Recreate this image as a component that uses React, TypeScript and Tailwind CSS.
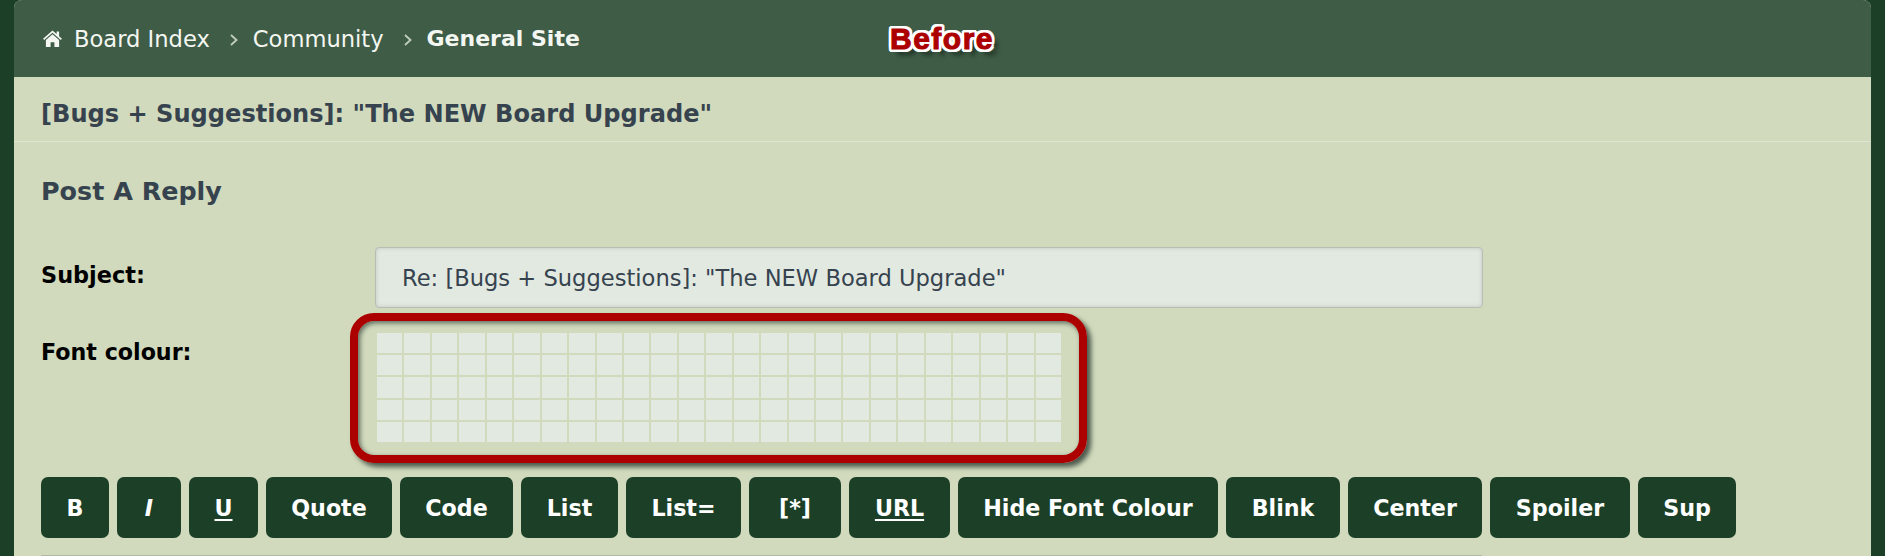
const cells = Array.from({ length: 25 * 5 });

const buttons: { label: string; w: string; extra?: string }[] = [
  { label: "B", w: "w-[68px]" },
  { label: "I", w: "w-[64px]", extra: "italic" },
  { label: "U", w: "w-[69px]", extra: "underline decoration-2 underline-offset-[3px]" },
  { label: "Quote", w: "w-[126px]" },
  { label: "Code", w: "w-[113px]" },
  { label: "List", w: "w-[97px]" },
  { label: "List=", w: "w-[115px]" },
  { label: "[*]", w: "w-[92px]" },
  { label: "URL", w: "w-[101px]", extra: "underline decoration-2 underline-offset-[3px]" },
  { label: "Hide Font Colour", w: "w-[260px]" },
  { label: "Blink", w: "w-[114px]" },
  { label: "Center", w: "w-[134px]" },
  { label: "Spoiler", w: "w-[140px]" },
  { label: "Sup", w: "w-[98px]" },
];

function Chevron() {
  return (
    <svg width="10" height="14" viewBox="0 0 10 14" className="ml-[19px] mr-[14px] mt-[2px]" fill="none" stroke="#c3cfbd" strokeWidth="1.8">
      <path d="M2 2l5.5 5L2 12" />
    </svg>
  );
}

export default function App() {
  return (
    <div className="h-[556px] w-full overflow-hidden bg-[#1c4027] px-[14px] font-['DejaVu_Sans',sans-serif]">
      <div className="relative h-[556px] overflow-hidden rounded-t-[8px] bg-[#d1dabc]">
        <div className="flex h-[77px] items-center bg-[#3e5c46] pl-[28px] text-[22.6px] leading-[30px] text-[#f4f6f1]">
          <svg width="21" height="17" viewBox="0 0 20 18" className="mr-[11px]" fill="#f4f6f1">
            <path d="M10 0.5L0 9.2l1.2 1.4L10 3l8.8 7.6L20 9.2l-3-2.6V1.5h-2.6v2.8z" />
            <path d="M10 4.6L3 10.6V18h5v-5h4v5h5v-7.4z" />
          </svg>
          <span>Board Index</span>
          <Chevron />
          <span>Community</span>
          <Chevron />
          <span className="text-[22px] font-bold">General Site</span>
        </div>

        <div className="absolute left-[876px] top-[23px] text-[30px] font-bold leading-[32px] tracking-[1.5px] text-[#ac0000] [-webkit-text-stroke:1px_#ac0000] [text-shadow:-3px_0_0_#fff,3px_0_0_#fff,0_-3px_0_#fff,0_3px_0_#fff,-3px_-2px_0_#fff,3px_-2px_0_#fff,-3px_2px_0_#fff,3px_2px_0_#fff,-2px_-3px_0_#fff,2px_-3px_0_#fff,-2px_3px_0_#fff,2px_3px_0_#fff,6px_6px_4px_#1d2e22] font-['Liberation_Sans',sans-serif]">
          Before
        </div>

        <div className="flex h-[65px] items-center border-b border-[#dfe5d2] pl-[27px] pt-[10px] text-[24.1px] font-bold leading-[32px] text-[#36434f]">
          [Bugs + Suggestions]: "The NEW Board Upgrade"
        </div>

        <div className="pl-[27px] pt-[33px] text-[25.4px] font-bold leading-[32px] text-[#36434f]">Post A Reply</div>

        <div className="mt-[40px] flex pl-[27px]">
          <div className="w-[334px] pt-[15px] text-[22.4px] font-bold leading-[26px] text-black">Subject:</div>
          <div className="flex h-[61px] w-[1108px] items-center rounded-[4px] border border-[#b9bdb5] bg-[#e2e9e1] pl-[26px] text-[22.6px] leading-[30px] text-[#36434f] shadow-[inset_0_0_4px_rgba(0,0,0,0.15)]">
            Re: [Bugs + Suggestions]: "The NEW Board Upgrade"
          </div>
        </div>

        <div className="mt-[25px] flex pl-[27px]">
          <div className="w-[336px] pt-[6px] text-[22.2px] font-bold leading-[26px] text-black">Font colour:</div>
          <div className="grid h-[109px] w-[684px] grid-cols-[repeat(25,1fr)] grid-rows-[repeat(5,1fr)] gap-[2px]">
            {cells.map((_, i) => (
              <div key={i} className="bg-[#e2e9e1]" />
            ))}
          </div>
        </div>

        <div className="absolute left-[336px] top-[313px] h-[150px] w-[737px] rounded-[24px] border-[8px] border-[#ac0000] shadow-[4px_4px_5px_#4c584c,inset_2px_2px_5px_#5c685c]" />

        <div className="mt-[35px] flex gap-[8px] pl-[27px]">
          {buttons.map((b) => (
            <button
              key={b.label}
              className={`flex h-[61px] shrink-0 items-center justify-center rounded-[7px] bg-[#1c4027] text-[22.2px] font-bold leading-[30px] text-white ${b.w}`}
            >
              <span className={b.extra}>{b.label}</span>
            </button>
          ))}
        </div>
        <div className="ml-[27px] mt-[17px] h-px w-[1441px] bg-[#b0b8aa]" />
      </div>
    </div>
  );
}
